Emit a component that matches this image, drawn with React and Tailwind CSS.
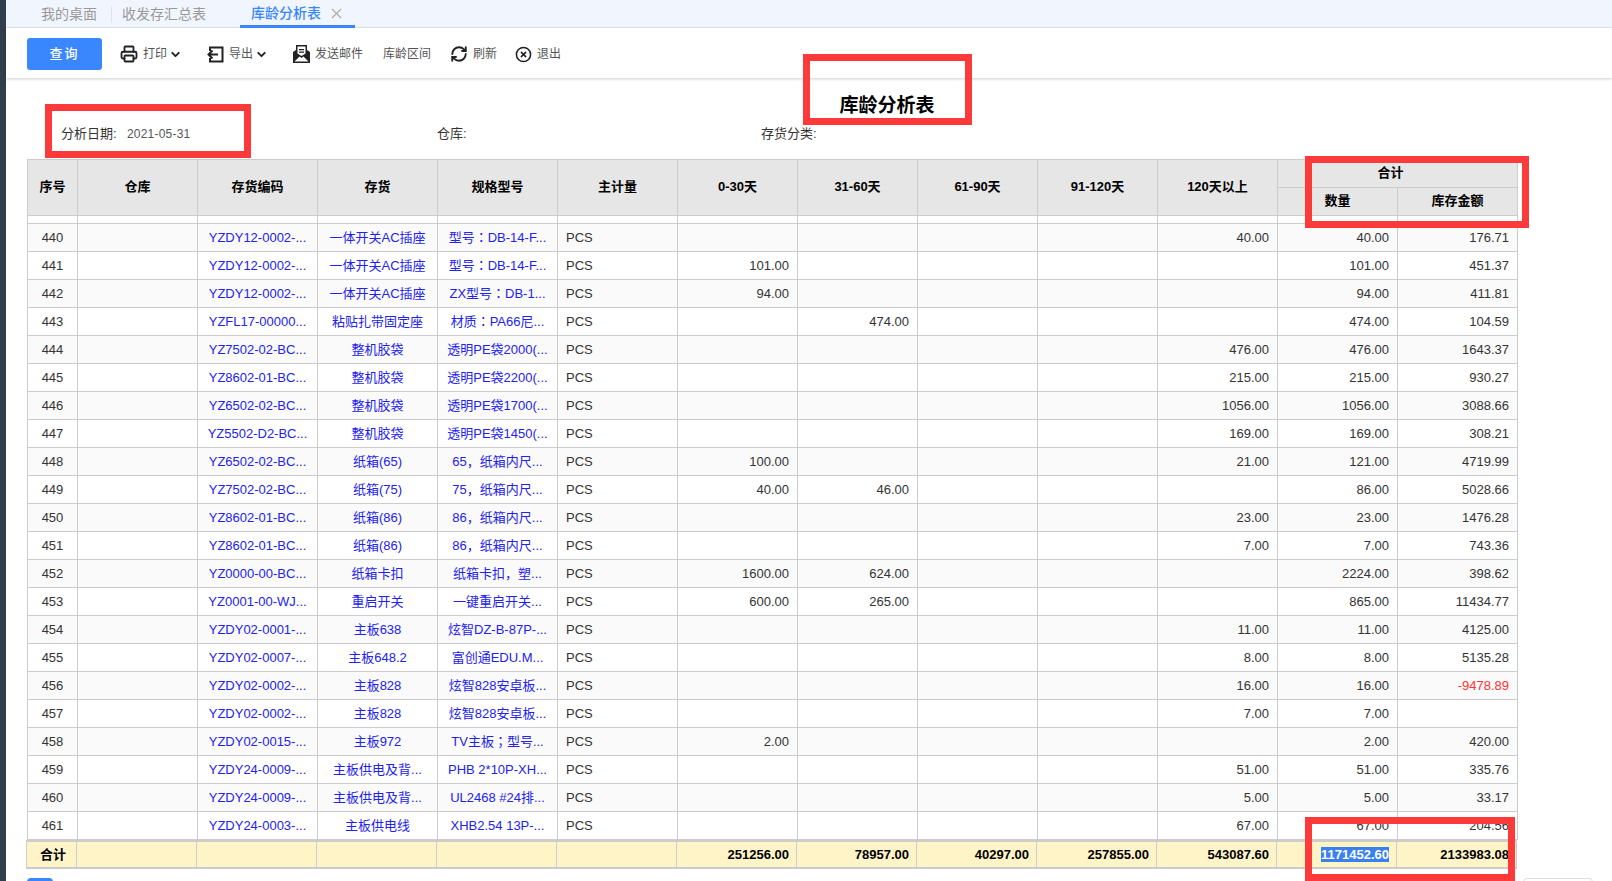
import { ChevronDown, CircleX, Printer, RefreshCw, X } from "lucide-react";

const rows = [
  [440, "YZDY12-0002-...", "一体开关AC插座", "型号：DB-14-F...", "", "", "", "", "40.00", "40.00", "176.71"],
  [441, "YZDY12-0002-...", "一体开关AC插座", "型号：DB-14-F...", "101.00", "", "", "", "", "101.00", "451.37"],
  [442, "YZDY12-0002-...", "一体开关AC插座", "ZX型号：DB-1...", "94.00", "", "", "", "", "94.00", "411.81"],
  [443, "YZFL17-00000...", "粘贴扎带固定座", "材质：PA66尼...", "", "474.00", "", "", "", "474.00", "104.59"],
  [444, "YZ7502-02-BC...", "整机胶袋", "透明PE袋2000(...", "", "", "", "", "476.00", "476.00", "1643.37"],
  [445, "YZ8602-01-BC...", "整机胶袋", "透明PE袋2200(...", "", "", "", "", "215.00", "215.00", "930.27"],
  [446, "YZ6502-02-BC...", "整机胶袋", "透明PE袋1700(...", "", "", "", "", "1056.00", "1056.00", "3088.66"],
  [447, "YZ5502-D2-BC...", "整机胶袋", "透明PE袋1450(...", "", "", "", "", "169.00", "169.00", "308.21"],
  [448, "YZ6502-02-BC...", "纸箱(65)", "65，纸箱内尺...", "100.00", "", "", "", "21.00", "121.00", "4719.99"],
  [449, "YZ7502-02-BC...", "纸箱(75)", "75，纸箱内尺...", "40.00", "46.00", "", "", "", "86.00", "5028.66"],
  [450, "YZ8602-01-BC...", "纸箱(86)", "86，纸箱内尺...", "", "", "", "", "23.00", "23.00", "1476.28"],
  [451, "YZ8602-01-BC...", "纸箱(86)", "86，纸箱内尺...", "", "", "", "", "7.00", "7.00", "743.36"],
  [452, "YZ0000-00-BC...", "纸箱卡扣", "纸箱卡扣，塑...", "1600.00", "624.00", "", "", "", "2224.00", "398.62"],
  [453, "YZ0001-00-WJ...", "重启开关", "一键重启开关...", "600.00", "265.00", "", "", "", "865.00", "11434.77"],
  [454, "YZDY02-0001-...", "主板638", "炫智DZ-B-87P-...", "", "", "", "", "11.00", "11.00", "4125.00"],
  [455, "YZDY02-0007-...", "主板648.2", "富创通EDU.M...", "", "", "", "", "8.00", "8.00", "5135.28"],
  [456, "YZDY02-0002-...", "主板828", "炫智828安卓板...", "", "", "", "", "16.00", "16.00", "-9478.89"],
  [457, "YZDY02-0002-...", "主板828", "炫智828安卓板...", "", "", "", "", "7.00", "7.00", ""],
  [458, "YZDY02-0015-...", "主板972", "TV主板；型号...", "2.00", "", "", "", "", "2.00", "420.00"],
  [459, "YZDY24-0009-...", "主板供电及背...", "PHB 2*10P-XH...", "", "", "", "", "51.00", "51.00", "335.76"],
  [460, "YZDY24-0009-...", "主板供电及背...", "UL2468 #24排...", "", "", "", "", "5.00", "5.00", "33.17"],
  [461, "YZDY24-0003-...", "主板供电线", "XHB2.54 13P-...", "", "", "", "", "67.00", "67.00", "204.56"],
];

const th = "border border-[#ccc] bg-[#e6e6e6] pb-[2px] font-bold text-black text-center";
const td = "border border-[#ccc] px-2 text-[#333] whitespace-nowrap overflow-hidden";
const link = "border border-[#ccc] px-2 whitespace-nowrap overflow-hidden text-center text-[#2222ee]";
const redBox = "absolute border-[7px] border-[#fd3a3a]";

function Cols() {
  return (
    <colgroup>
      <col className="w-[50px]" />
      {Array.from({ length: 12 }).map((_, i) => (
        <col key={i} className="w-[120px]" />
      ))}
    </colgroup>
  );
}

function ExportIcon() {
  return (
    <svg width="17" height="17" viewBox="0 0 17 17" fill="none" stroke="#222" strokeWidth="2">
      <path d="M3 5V1.5h12.5v14H3V12" />
      <path d="M11 8.5H1.5M5.5 4.5l-4 4 4 4" />
    </svg>
  );
}

function MailIcon() {
  return (
    <svg width="17" height="18" viewBox="0 0 17 18">
      <path d="M0 7l3-2V0h11v5l3 2v11H0z" fill="#222" />
      <path d="M4.5 1.5h8v7l-4 2.5-4-2.5z" fill="#fff" />
      <path d="M6 4h5v1.2H6zM6 6.5h5v1.2H6z" fill="#222" />
      <path d="M1.5 16.5l5-5 2 1.4 2-1.4 5 5z" fill="#fff" />
    </svg>
  );
}

function Tool({ icon, label, chevron, className }) {
  return (
    <div className={`flex items-center text-[12px] text-[#555] ${className}`}>
      {icon}
      <span className={icon ? "ml-[5px]" : ""}>{label}</span>
      {chevron && <ChevronDown size={13} strokeWidth={3.5} className="ml-[2px] text-[#222]" />}
    </div>
  );
}

export default function App() {
  return (
    <div
      className="relative flex h-[881px] overflow-hidden bg-white"
      style={{ fontFamily: '"Liberation Sans", "Noto Sans CJK SC", sans-serif' }}
    >
      <div className="w-[6px] shrink-0 bg-[#323e4c]" />
      <div className="min-w-0 flex-1">
        <div className="flex h-[28px] border-b border-[#e4e8ef] bg-[#f0f5fe] pl-[35px] text-[14px] text-[#999]">
          <div className="flex h-[28px] items-center pt-px">我的桌面</div>
          <div className="ml-[14px] mt-[6px] h-[16px] w-px bg-[#dfe3ea]" />
          <div className="ml-[10px] flex h-[28px] items-center pt-px">收发存汇总表</div>
          <div className="ml-[34px] flex h-[28px] w-[115px] items-center border-b-[3px] border-[#3a87fd] pl-[11px] pt-px font-medium text-[#3a87fd]">
            库龄分析表
            <X size={17} strokeWidth={1.5} className="ml-[7px] text-[#aaa]" />
          </div>
        </div>

        <div className="flex h-[50px] items-center pl-[21px] pt-[2px] shadow-[0_1px_3px_rgba(0,0,0,0.2)]">
          <button className="h-[32px] w-[75px] rounded-[3px] bg-[#3a87fd] text-[13px] font-medium tracking-[2px] text-white">
            查询
          </button>
          <Tool className="ml-[18px]" icon={<Printer size={18} strokeWidth={2.4} className="text-[#222]" />} label="打印" chevron />
          <Tool className="ml-[25px]" icon={<ExportIcon />} label="导出" chevron />
          <Tool className="ml-[25px]" icon={<MailIcon />} label="发送邮件" />
          <Tool className="ml-[20px]" label="库龄区间" />
          <Tool className="ml-[19px]" icon={<RefreshCw size={18} strokeWidth={2.5} className="text-[#222]" />} label="刷新" />
          <Tool className="ml-[18px]" icon={<CircleX size={17} strokeWidth={2.2} className="text-[#222]" />} label="退出" />
        </div>

        <div className="mt-[14px] h-[27px] pl-[156px] text-center text-[19px] font-bold leading-[27px] text-black">
          库龄分析表
        </div>

        <div className="flex h-[30px] items-center pl-[55px] text-[13px] text-[#333]">
          <span className="w-[66px]">分析日期:</span>
          <span className="w-[310px] text-[12px] tracking-[0.2px] text-[#555]">2021-05-31</span>
          <span className="w-[324px]">仓库:</span>
          <span>存货分类:</span>
        </div>

        <div className="ml-[21px] mt-[10px] w-[1490px] text-[13px]">
          <table className="w-[1490px] table-fixed border-collapse">
            <Cols />
            <thead>
              <tr className="h-[28px]">
                {["序号", "仓库", "存货编码", "存货", "规格型号", "主计量", "0-30天", "31-60天", "61-90天", "91-120天", "120天以上"].map((h) => (
                  <th key={h} rowSpan={2} className={th}>
                    {h}
                  </th>
                ))}
                <th colSpan={2} className={`${th} pr-[14px]`}>
                  合计
                </th>
              </tr>
              <tr className="h-[28px]">
                <th className={th}>数量</th>
                <th className={th}>库存金额</th>
              </tr>
            </thead>
            <tbody>
              <tr className="h-[8px]">
                {Array.from({ length: 13 }).map((_, i) => (
                  <td key={i} className="border border-[#ccc]" />
                ))}
              </tr>
              {rows.map((r) => (
                <tr key={r[0]} className={`h-[28px] ${r[0] % 2 === 0 ? "bg-[#fafafa]" : "bg-white"}`}>
                  <td className={`${td} text-center`}>{r[0]}</td>
                  <td className={td} />
                  <td className={link}>{r[1]}</td>
                  <td className={link}>{r[2]}</td>
                  {/* TC font centres the full-width colon like the reference */}
                  <td className={`${link} ${/[：；]/.test(r[3]) ? "[font-family:'Liberation_Sans','Noto_Sans_CJK_TC',sans-serif]" : ""}`}>
                    {r[3]}
                  </td>
                  <td className={td}>PCS</td>
                  {r.slice(4).map((v, i) => (
                    <td key={i} className={`${td} text-right ${v.startsWith("-") ? "text-[#f33]" : ""}`}>
                      {v}
                    </td>
                  ))}
                </tr>
              ))}
            </tbody>
          </table>

          <table className="-ml-px w-[1490px] table-fixed border-collapse bg-[#fff4c8] font-bold text-black">
            <Cols />
            <tbody>
              <tr className="h-[27px] border-t-2 border-b-2 border-[#ccc]">
                <td className="border-x border-[#ccc] pl-[3px] text-center">合计</td>
                {["", "", "", "", "", "251256.00", "78957.00", "40297.00", "257855.00", "543087.60"].map((v, i) => (
                  <td key={i} className="border-x border-[#ccc] pl-2 pr-[7px] text-right">
                    {v}
                  </td>
                ))}
                <td className="border-x border-[#ccc] pl-2 pr-[7px] text-right">
                  <span className="bg-[#3a80f0] text-white">1171452.60</span>
                </td>
                <td className="border-x border-[#ccc] pl-2 pr-[7px] text-right">2133983.08</td>
              </tr>
            </tbody>
          </table>

          <div className="mt-[9px] flex">
            <div className="h-[24px] w-[26px] rounded-[4px] bg-[#3a87fd]" />
            <div className="ml-auto mr-[-76px] flex gap-[18px]">
              <div className="h-[24px] w-[12px] rounded-[4px] border border-[#ddd]" />
              <div className="h-[24px] w-[70px] rounded-[4px] border border-[#ddd]" />
            </div>
          </div>
        </div>
      </div>

      <div className={`${redBox} left-[803px] top-[54px] h-[71px] w-[169px]`} />
      <div className={`${redBox} left-[45px] top-[104px] h-[54px] w-[206px]`} />
      <div className={`${redBox} left-[1305px] top-[156px] h-[72px] w-[224px]`} />
      <div className={`${redBox} left-[1305px] top-[817px] h-[64px] w-[210px]`} />
    </div>
  );
}
